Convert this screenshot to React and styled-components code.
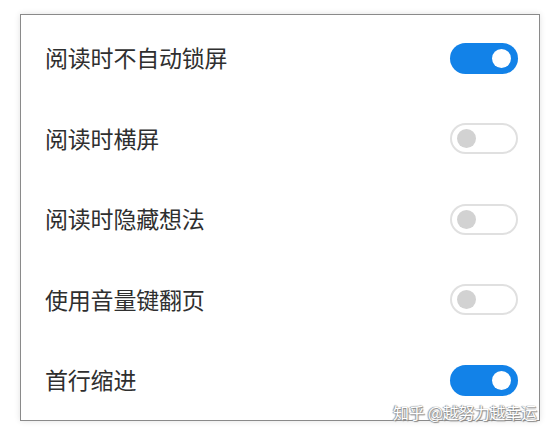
import React from "react";
import styled, { createGlobalStyle } from "styled-components";

const Global = createGlobalStyle`
  html, body { margin: 0; padding: 0; background: #ffffff; }
  body { font-family: "Noto Sans CJK SC", "Noto Sans", sans-serif; }
`;

const Page = styled.div`
  position: relative;
  width: 560px;
  height: 437px;
  padding: 14px 20px 0 20px;
  box-sizing: border-box;
  background: #fff;
`;

const Panel = styled.div`
  width: 520px;
  height: 407px;
  box-sizing: border-box;
  border: 1px solid #8a8a8a;
  background: #fff;
  box-shadow: 0 0 6px rgba(0, 0, 0, 0.12);
  padding: 3px 21px 0 24px;
  display: flex;
  flex-direction: column;
`;

const Row = styled.div`
  height: 80.5px;
  flex: none;
  display: flex;
  align-items: center;
  justify-content: space-between;
`;

const Label = styled.span`
  font-family: "Noto Sans CJK SC", sans-serif;
  font-size: 23px;
  color: #2f2f2f;
  letter-spacing: -0.2px;
  position: relative;
  top: -1px;
`;

const Track = styled.div`
  position: relative;
  width: 68px;
  height: 31px;
  box-sizing: border-box;
  border-radius: 16px;
  background: ${(p) => (p.$on ? "#1282e8" : "#fff")};
  border: ${(p) => (p.$on ? "none" : "2px solid #e0e0e0")};
  display: flex;
  align-items: center;
  justify-content: ${(p) => (p.$on ? "flex-end" : "flex-start")};
  padding: 0 ${(p) => (p.$on ? "7px" : "5px")};
`;

const Knob = styled.div`
  width: 19px;
  height: 19px;
  border-radius: 50%;
  background: ${(p) => (p.$on ? "#ffffff" : "#d2d2d2")};
`;

const Watermark = styled.div`
  position: absolute;
  left: 393px;
  top: 402px;
  font-family: "Noto Sans CJK SC", sans-serif;
  font-size: 16px;
  line-height: 20px;
  color: #ffffff;
  white-space: nowrap;
  text-shadow: 0 0 1px #777, 1px 1px 1px #888, -1px 0 1px #999;
  letter-spacing: -0.3px;
`;

const items = [
  { label: "阅读时不自动锁屏", on: true },
  { label: "阅读时横屏", on: false },
  { label: "阅读时隐藏想法", on: false },
  { label: "使用音量键翻页", on: false },
  { label: "首行缩进", on: true },
];

export default function App() {
  return (
    <>
      <Global />
      <Page>
        <Panel>
          {items.map((it) => (
            <Row key={it.label}>
              <Label>{it.label}</Label>
              <Track $on={it.on}>
                <Knob $on={it.on} />
              </Track>
            </Row>
          ))}
        </Panel>
        <Watermark>知乎 @越努力越幸运</Watermark>
      </Page>
    </>
  );
}
